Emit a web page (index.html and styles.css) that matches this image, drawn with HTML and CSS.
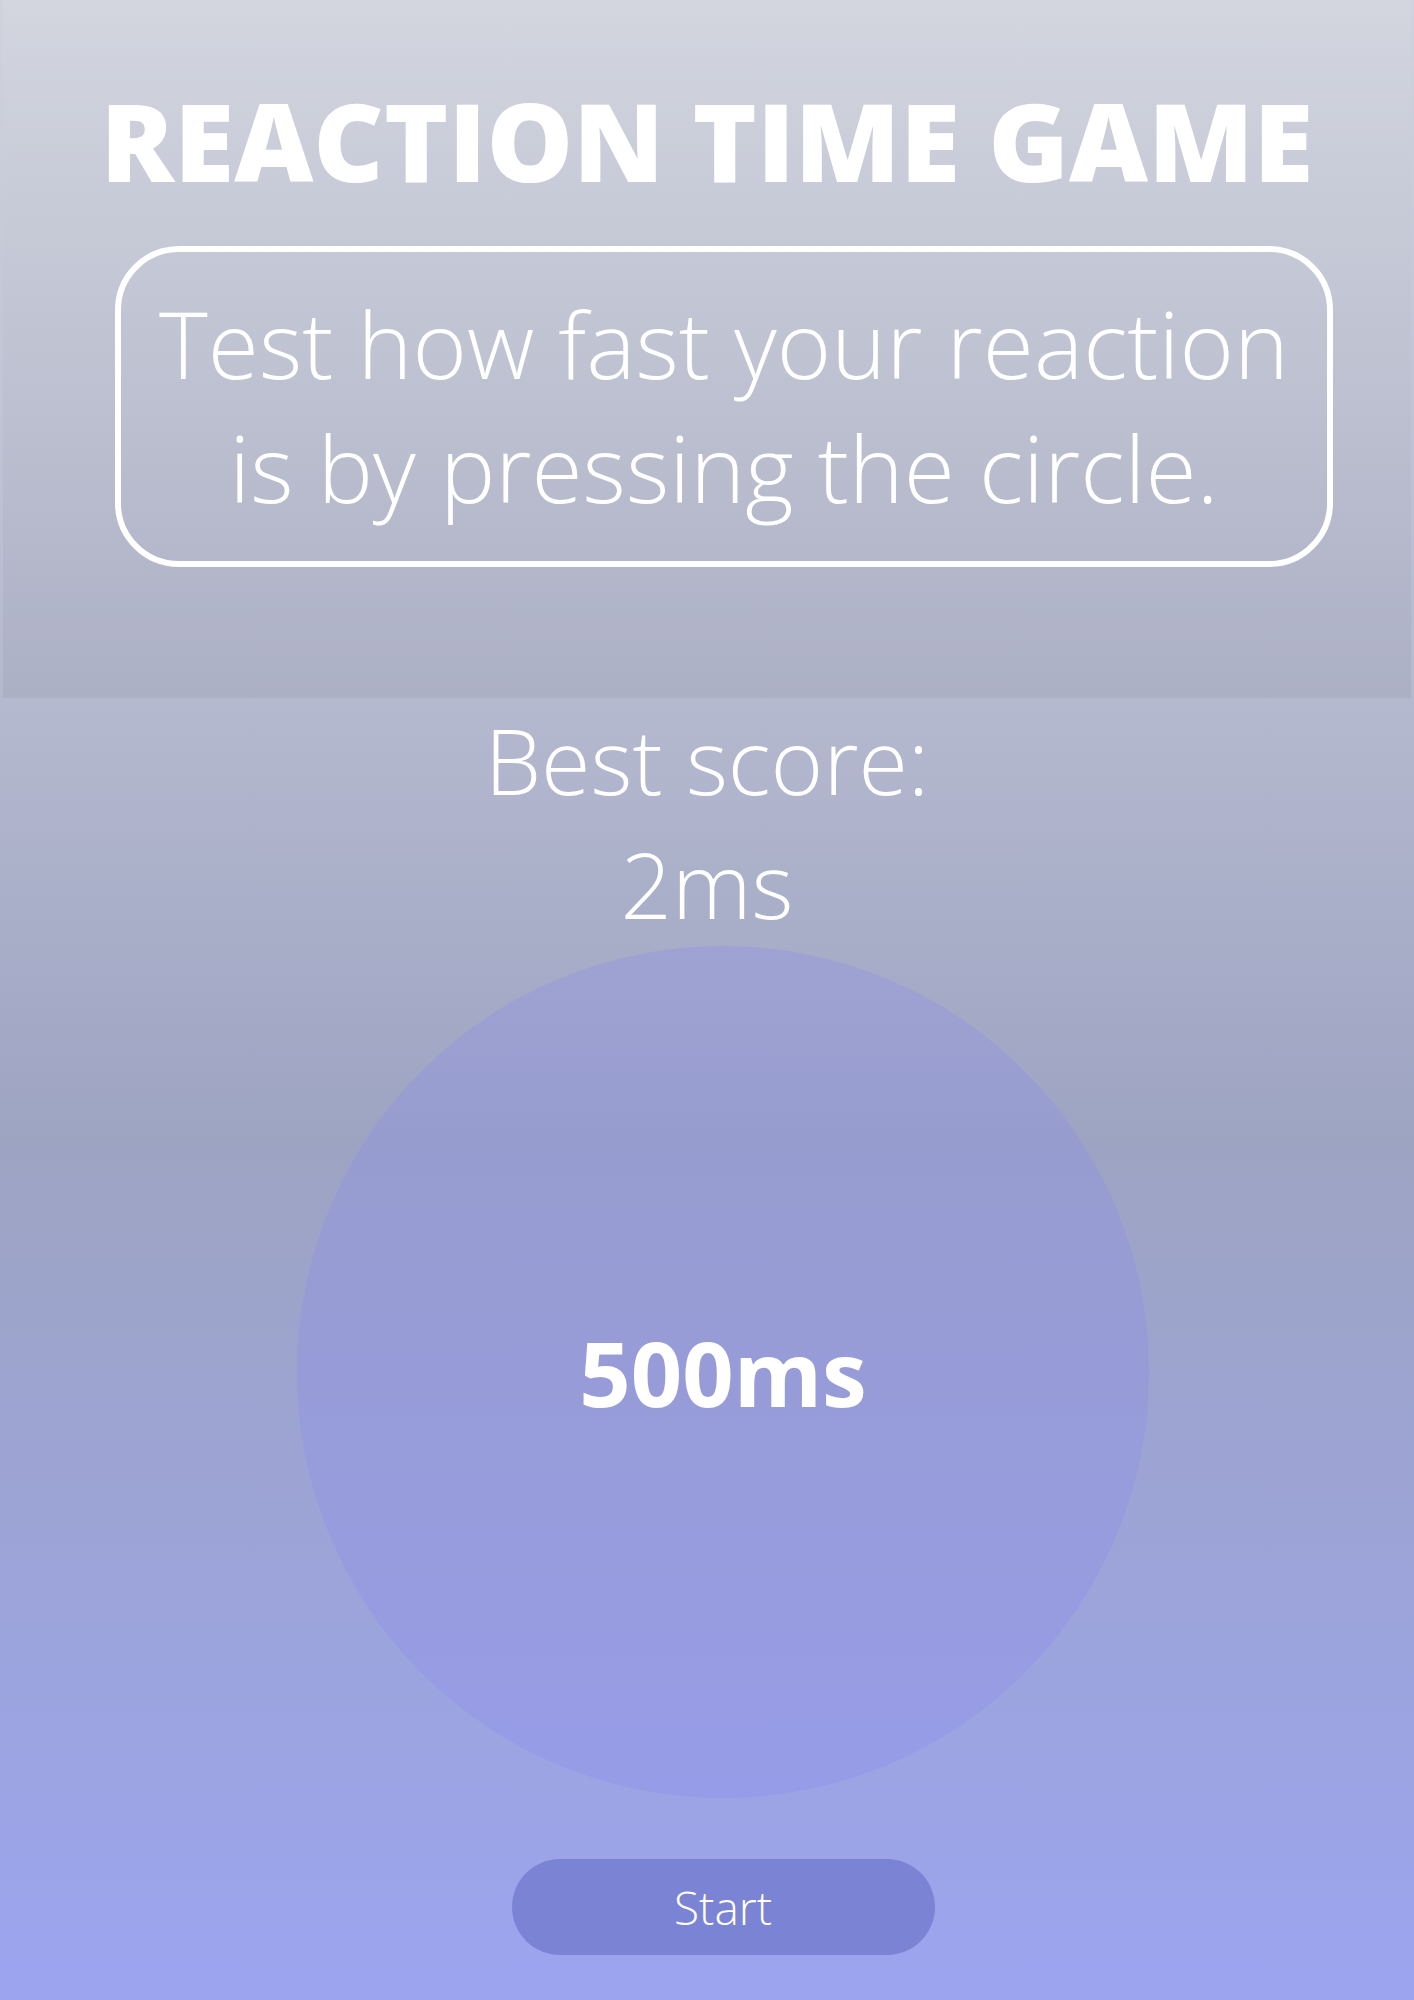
FILE: index.html
```html
<!DOCTYPE html>
<html lang="en">
<head>
<meta charset="utf-8">
<title>Reaction Time Game</title>
<link rel="stylesheet" href="styles.css">
</head>
<body>
<header class="hero">
  <h1 class="title">REACTION TIME GAME</h1>
  <div class="intro">
    <p class="intro-text">Test how fast your reaction is by pressing the circle.</p>
  </div>
</header>
<main class="game">
  <h2 class="best-label">Best score:</h2>
  <p class="best-value">2ms</p>
  <div class="stage">
    <div class="target"><span class="target-time">500ms</span></div>
    <button class="start-btn" type="button">Start</button>
  </div>
</main>
</body>
</html>
```

FILE: styles.css
```css
* { box-sizing: border-box; }

html, body {
  margin: 0;
  padding: 0;
}

body {
  min-height: 2000px;
  font-family: "Open Sans", "Noto Sans", sans-serif;
  color: #ffffff;
  background: linear-gradient(to bottom,
    #d0d3dd 0%,
    #b5b9cf 35%,
    #9da4c2 57%,
    #9ca4f0 100%);
}

.hero {
  margin: 0 3px;
  height: 698px;
  padding-top: 75px;
  background: linear-gradient(to bottom, #d3d6df 0%, #acb0c5 100%);
}

.title {
  margin: 0;
  font-size: 109px;
  line-height: 1.2;
  font-weight: 800;
  text-align: center;
  letter-spacing: 0;
}

.intro {
  width: 1218px;
  height: 321px;
  margin: 40px 0 0 112px;
  border: 6px solid #ffffff;
  border-radius: 64px;
  padding: 29px 16px 0;
}

.intro-text {
  margin: 0;
  font-size: 93px;
  line-height: 124px;
  font-weight: 300;
  text-align: center;
}

.game {
  display: flex;
  flex-direction: column;
  align-items: center;
}

.best-label,
.best-value {
  margin: 0;
  font-size: 90px;
  line-height: 124px;
  font-weight: 300;
  text-align: center;
}

.stage {
  display: flex;
  flex-direction: column;
  align-items: center;
  padding-left: 32px;
}

.target {
  width: 852px;
  height: 852px;
  border-radius: 50%;
  background: rgba(140, 140, 240, 0.3);
  display: flex;
  align-items: center;
  justify-content: center;
}

.target-time {
  font-size: 90px;
  font-weight: 700;
  line-height: 1;
}

.start-btn {
  margin-top: 61px;
  width: 423px;
  height: 96px;
  border: none;
  border-radius: 48px;
  background: #7b83d4;
  color: #ffffff;
  font-family: "Open Sans", "Noto Sans", sans-serif;
  font-size: 46px;
  font-weight: 300;
  padding: 0;
}
```
